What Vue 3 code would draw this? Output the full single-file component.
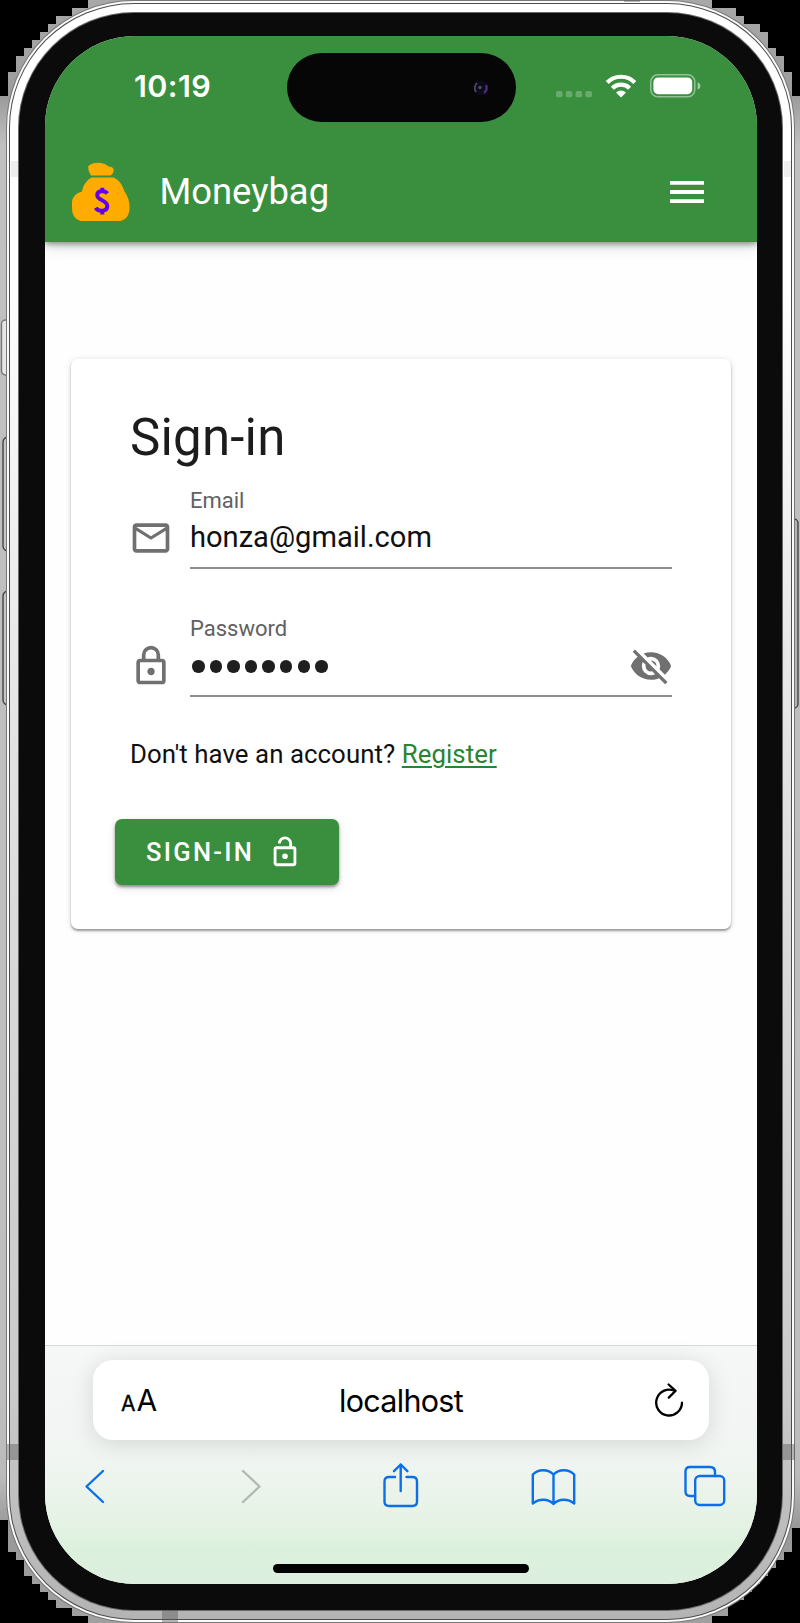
<script setup>
import { ref } from 'vue'

const email = ref('honza@gmail.com')
const passwordLength = 8
const icons = {
  email: 'M22 6C22 4.9 21.1 4 20 4H4C2.9 4 2 4.9 2 6V18C2 19.1 2.9 20 4 20H20C21.1 20 22 19.1 22 18V6M20 6L12 11L4 6H20M20 18H4V8L12 13L20 8V18Z',
  lock: 'M12,17C10.89,17 10,16.1 10,15C10,13.89 10.89,13 12,13A2,2 0 0,1 14,15A2,2 0 0,1 12,17M18,20V10H6V20H18M18,8A2,2 0 0,1 20,10V20A2,2 0 0,1 18,22H6C4.89,22 4,21.1 4,20V10C4,8.89 4.89,8 6,8H7V6A5,5 0 0,1 12,1A5,5 0 0,1 17,6V8H18M12,3A3,3 0 0,0 9,6V8H15V6A3,3 0 0,0 12,3Z',
  lockOpen: 'M18,20V10H6V20H18M18,8A2,2 0 0,1 20,10V20A2,2 0 0,1 18,22H6C4.89,22 4,21.1 4,20V10A2,2 0 0,1 6,8H15V6A3,3 0 0,0 12,3A3,3 0 0,0 9,6H7A5,5 0 0,1 12,1A5,5 0 0,1 17,6V8H18M12,17A2,2 0 0,1 10,15A2,2 0 0,1 12,13A2,2 0 0,1 14,15A2,2 0 0,1 12,17Z',
  eyeOff: 'M11.83,9L15,12.16C15,12.11 15,12.05 15,12A3,3 0 0,0 12,9C11.94,9 11.89,9 11.83,9M7.53,9.8L9.08,11.35C9.03,11.56 9,11.77 9,12A3,3 0 0,0 12,15C12.22,15 12.44,14.97 12.65,14.92L14.2,16.47C13.53,16.8 12.79,17 12,17A5,5 0 0,1 7,12C7,11.21 7.2,10.47 7.53,9.8M2,4.27L4.28,6.55L4.73,7C3.08,8.3 1.78,10 1,12C2.73,16.39 7,19.5 12,19.5C13.55,19.5 15.03,19.2 16.38,18.66L16.81,19.08L19.73,22L21,20.73L3.27,3M12,7A5,5 0 0,1 17,12C17,12.64 16.87,13.26 16.64,13.82L19.57,16.75C21.07,15.5 22.27,13.86 23,12C21.27,7.61 17,4.5 12,4.5C10.6,4.5 9.26,4.75 8,5.2L10.17,7.35C10.74,7.13 11.35,7 12,7Z',
}
</script>

<template>
  <div class="stage">
    <!-- stepped plate behind the phone, with the hardware buttons -->
    <svg class="plate" width="800" height="1623" viewBox="0 0 800 1623" shape-rendering="crispEdges">
      <defs>
        <linearGradient id="plateFill" x1="0" y1="0" x2="0" y2="1">
          <stop offset="0" stop-color="#a8a8a8" />
          <stop offset="0.06" stop-color="#9c9c9c" />
          <stop offset="0.09" stop-color="#c0c0c0" />
          <stop offset="0.85" stop-color="#bebebe" />
          <stop offset="0.91" stop-color="#bbbbbb" />
          <stop offset="0.94" stop-color="#999999" />
          <stop offset="1" stop-color="#a0a0a0" />
        </linearGradient>
      </defs>
      <path
        fill="url(#plateFill)"
        d="M88 0H712V8H736V16H744V24H760V32H768V48H776V56H784V72H792V96H800V1528H792V1552H784V1560H776V1568H768V1576H760V1584H752V1592H744V1600H728V1616H712V1623H88V1616H72V1608H56V1600H48V1592H40V1584H32V1576H24V1560H16V1552H8V1520H0V96H8V72H16V56H24V48H32V40H40V32H48V24H56V16H72V8H88Z"
      />
      <g shape-rendering="auto" stroke="#444" stroke-width="1.4">
        <rect x="1.500" y="320" width="12" height="55" rx="4" fill="#e6e6e6" stroke="#777" />
        <rect x="3" y="437" width="12" height="114" rx="5" fill="#c4c4c4" />
        <rect x="3" y="591" width="12" height="114" rx="5" fill="#c4c4c4" />
        <rect x="786" y="519" width="12" height="189" rx="4" fill="#b4b4b4" />
      </g>
    </svg>

    <div class="edge">
      <div class="rim">
        <div class="groove">
          <div class="band">
            <div class="lip">
              <div class="bezel">
                <div class="screen">
                  <header class="top">
                    <div class="island">
                      <svg width="18" height="18" viewBox="0 0 18 18">
                        <circle cx="9" cy="9" r="7.5" fill="#0c0b18" />
                        <path d="M5 4A7 7 0 0 0 4 13" stroke="#46456c" stroke-width="2" fill="none" />
                        <path d="M14 6A7 7 0 0 1 12 14" stroke="#4a2a80" stroke-width="2.4" fill="none" />
                        <circle cx="8" cy="8.5" r="1.8" fill="#4a4a58" />
                      </svg>
                    </div>
                    <div class="status">
                      <span class="clock">10:19</span>
                      <div class="signals">
                        <svg width="36" height="7" viewBox="0 0 36 7" fill="#fff" opacity=".25">
                          <rect v-for="n in 4" :key="n" :x="(n - 1) * 9.8" y="0" width="6.5" height="6.3" rx="1.8" />
                        </svg>
                        <svg class="wifi" width="32" height="24" viewBox="0 0 32 24" fill="none" stroke="#fff" stroke-width="4.2">
                          <path d="M2.2 8.5C9.6.8 22.4.8 29.8 8.5" />
                          <path d="M7.4 14.2C12 9.5 20 9.5 24.6 14.2" />
                          <path d="M16 23.5L11 18.4C13.8 15.7 18.2 15.7 21 18.4Z" fill="#fff" stroke="none" />
                        </svg>
                        <svg width="51" height="24" viewBox="0 0 51 24">
                          <rect x=".8" y=".8" width="44" height="22" rx="7" fill="none" stroke="#fff" stroke-opacity=".45" stroke-width="1.5" />
                          <rect x="3.4" y="3.4" width="38.8" height="16.8" rx="4.8" fill="#fff" />
                          <path d="M47.6 8.2C51.2 9.4 51.2 14.4 47.6 15.6Z" fill="#fff" opacity=".55" />
                        </svg>
                      </div>
                    </div>
                    <div class="appbar">
                      <svg class="bag" width="58" height="60" viewBox="0 0 58 60">
                        <path fill="#ffab00" d="M19 13.5C17 10 16 7.5 16.300 4C21-.2 31-.8 36.500 4.500C38.500 5 40.500 4.800 41.500 7C42 9.500 41 12 38.5 13.5Z" />
                        <path fill="#ffab00" d="M19.5 15.5H41.5C47 18 50.5 23 52.5 29.5C56 34 57.8 40 57.5 46C57.5 53 54 58 48 59H9C3 57.5 0 53 0 46V40C.5 34.500 4.500 31 10 29.5C11 23.5 14 19 19.5 15.5Z" />
                        <path fill="none" stroke="#6200ea" stroke-width="4" d="M35.3 31.5C33 28.2 25.2 28.2 25.2 33.2C25.2 38.5 35.3 38 35.3 44C35.3 50 26 50 23.8 45.8M30.3 25.8V30M30.3 48V52.5" />
                      </svg>
                      <h1 class="brand">Moneybag</h1>
                      <svg class="menu" width="34" height="22" viewBox="0 0 34 22" fill="#fff">
                        <path d="M0 0H34V3.8H0ZM0 9.1H34V12.9H0ZM0 18.2H34V22H0Z" />
                      </svg>
                    </div>
                  </header>

                  <main class="page">
                    <section class="card">
                      <h2 class="title">Sign-in</h2>
                      <div class="field">
                        <svg class="fieldicon" viewBox="0 0 24 24"><path :d="icons.email" /></svg>
                        <div class="control">
                          <span class="label">Email</span>
                          <div class="value"><span class="mail">{{ email }}</span></div>
                        </div>
                      </div>
                      <div class="field">
                        <svg class="fieldicon" viewBox="0 0 24 24"><path :d="icons.lock" /></svg>
                        <div class="control">
                          <span class="label">Password</span>
                          <div class="value">
                            <span class="dots"><i v-for="n in passwordLength" :key="n"></i></span>
                            <svg class="eye" viewBox="0 0 24 24"><path :d="icons.eyeOff" /></svg>
                          </div>
                        </div>
                      </div>
                      <p class="hint">Don't have an account? <a class="link">Register</a></p>
                      <button class="submit">
                        <span>SIGN-IN</span>
                        <svg width="34" height="34" viewBox="0 0 24 24" fill="#fff"><path :d="icons.lockOpen" /></svg>
                      </button>
                    </section>
                  </main>

                  <footer class="safari">
                    <div class="address">
                      <span class="reader"><small>A</small>A</span>
                      <span class="host">localhost</span>
                      <svg width="28" height="34" viewBox="0 0 28 34" fill="none" stroke="#000" stroke-width="2.3" stroke-linecap="round" stroke-linejoin="round">
                        <path d="M27 19.600A12.900 12.900 0 1 1 20 8.100" />
                        <path d="M13.600 1.500L20.600 7.800L13.800 14.600" />
                      </svg>
                    </div>
                    <nav class="tools">
                      <svg viewBox="0 0 52 52"><path d="M34 11L17.500 26.500L34 42" /></svg>
                      <svg class="off" viewBox="0 0 52 52"><path d="M21 11L37.500 26.500L21 42" /></svg>
                      <svg viewBox="0 0 52 52"><path d="M21 17H15Q10.500 17 10.500 21.500V41.500Q10.500 46 15 46H38.500Q43 46 43 41.500V21.500Q43 17 38.500 17H32.500M26.700 31V4.500M20 11.200L26.700 4.500L33.400 11.200" /></svg>
                      <svg viewBox="0 0 52 52"><path d="M26.500 14.500C21 8.500 11 9 5.800 14.500V43.500C12 38.500 21 38.500 26.500 44C32 38.500 41 38.500 47.200 43.500V14.500C42 9 32 8.500 26.500 14.500V44" /></svg>
                      <svg viewBox="0 0 52 52"><path d="M16 36H11Q6.500 36 6.500 31.500V11.500Q6.500 7 11 7H31Q36 7 36 12V16" /><rect x="16.200" y="16" width="29" height="29" rx="4.500" /></svg>
                    </nav>
                    <div class="home"></div>
                  </footer>
                </div>
              </div>
            </div>
          </div>
        </div>
      </div>
    </div>

    <!-- antenna lines across the metal frame -->
    <svg class="plate" width="800" height="1623" viewBox="0 0 800 1623" fill="#555" fill-opacity=".42">
      <path d="M7 1444H19V1460H7ZM783 1444H795V1460H783ZM162 1610H178V1622H162Z" />
      <path d="M11 161H18V177H11ZM784 161H791V177H784Z" fill-opacity=".1" />
      <path d="M624 0H640V2H624Z" />
    </svg>
  </div>
</template>

<style>
body {
  background: #000;
}
</style>

<style scoped>
.stage {
  position: relative;
  box-sizing: border-box;
  width: 800px;
  height: 1623px;
  padding: 0 5px 0 6px;
  overflow: hidden;
  background: #000;
  font-family: Roboto, "Liberation Sans", sans-serif;
}
.plate {
  position: absolute;
  left: 0;
  top: 0;
}
.stage div {
  box-sizing: border-box;
}
.edge,
.rim,
.groove,
.band,
.lip,
.bezel {
  height: 100%;
}
.edge {
  position: relative;
  padding: 1px;
  border-radius: 128px;
  background: #777;
}
.rim {
  padding: 2px;
  border-radius: 127px;
  background: #fafafa;
}
.groove {
  padding: 1px;
  border-radius: 125px;
  background: #4c4c4c;
}
.band {
  padding: 8px;
  border-radius: 124px;
  background: linear-gradient(#fff 0, #fff 17%, #e8e8e8 40%, #d8d8d8 60%, #cacaca 86%, #b4b4b4 100%);
}
.lip {
  padding: 1px;
  border-radius: 116px;
  background: #6a6a6a;
}
.bezel {
  padding: 23px 25px 25px 26px;
  border-radius: 115px;
  background: #0b0b0b;
}
.screen {
  display: flex;
  flex-direction: column;
  height: 1548px;
  border-radius: 90px;
  overflow: hidden;
  background: #fff;
}
.top {
  position: relative;
  z-index: 1;
  height: 206px;
  flex: none;
  background: #398f3d;
  box-shadow: 0 2px 6px rgba(0, 0, 0, 0.42), 0 5px 14px rgba(0, 0, 0, 0.12);
}
.island {
  position: absolute;
  left: 242px;
  top: 17px;
  width: 229px;
  height: 69px;
  border-radius: 35px;
  background: #060606;
  display: flex;
  align-items: center;
  justify-content: flex-end;
  padding: 1px 26px 0 0;
}
.status {
  display: flex;
  justify-content: space-between;
  align-items: center;
  height: 100px;
  padding: 0 56px 0 89px;
}
.clock {
  font: 600 30.500px/36px Inter, sans-serif;
  letter-spacing: 0.400px;
  color: #fff;
}
.signals {
  display: flex;
  align-items: center;
}
.signals svg:first-child {
  margin-top: 16px;
}
.wifi {
  margin: 0 13px 0 13px;
}
.appbar {
  display: flex;
  align-items: center;
  height: 106px;
  padding: 5px 53px 0 27px;
}
.brand {
  flex: 1;
  margin: 0 0 0 29.500px;
  font: 400 36.400px/44px Roboto, sans-serif;
  color: #fff;
}
.page {
  flex: 1;
  padding: 117px 26px 0;
  background: #fefefe;
}
.card {
  box-sizing: border-box;
  height: 570px;
  padding: 49px 59px 0;
  border-radius: 7px;
  background: #fff;
  box-shadow: 0 2px 2px rgba(0, 0, 0, 0.33), 0 1px 6px rgba(0, 0, 0, 0.14);
  color: #1c1c1c;
}
.title {
  margin: 0 0 20px;
  font: 400 51px/60px Roboto, sans-serif;
  letter-spacing: 0.200px;
}
.field {
  display: flex;
  height: 81px;
  margin-bottom: 47px;
}
.fieldicon {
  width: 44px;
  height: 44px;
  margin: 28px 17px 0 -1px;
  fill: #707070;
}
.control {
  flex: 1;
  display: flex;
  flex-direction: column;
  justify-content: space-between;
}
.label {
  font-size: 22px;
  line-height: 25px;
  color: #616161;
}
.value {
  display: flex;
  justify-content: space-between;
  height: 49px;
  border-bottom: 2px solid #8d8d8d;
}
.mail {
  font-size: 29.100px;
  line-height: 35px;
  color: #101010;
}
.dots {
  display: flex;
  gap: 5.100px;
  padding: 12px 0 0 2px;
}
.dots i {
  width: 12.500px;
  height: 12.500px;
  border-radius: 50%;
  background: #1f1f1f;
}
.eye {
  width: 44px;
  height: 44px;
  margin: -4px -1px 0 0;
  fill: #707070;
}
.hint {
  margin: -5px 0 50px;
  font-size: 25.800px;
  line-height: 30px;
  letter-spacing: 0.060px;
  color: #101010;
}
.link {
  color: #2a8430;
  text-decoration: underline;
  text-decoration-thickness: 1.500px;
  text-underline-offset: 3px;
}
.submit {
  display: flex;
  align-items: center;
  box-sizing: border-box;
  width: 224px;
  height: 66px;
  margin: 0 0 0 -15px;
  padding: 0 0 0 31px;
  gap: 14px;
  border: 0;
  border-radius: 7px;
  background: #398f3d;
  box-shadow: 0 2px 3px rgba(0, 0, 0, 0.4), 0 3px 8px rgba(0, 0, 0, 0.13);
  font: 500 25.500px/30px Roboto, sans-serif;
  letter-spacing: 2.300px;
  color: #fff;
}
.safari {
  box-sizing: border-box;
  flex: none;
  height: 239px;
  padding: 14px 0 0;
  border-top: 1px solid #d5dad7;
  background: linear-gradient(#f6f7f7 0, #f1f5f2 45%, #e7f3e7 70%, #dcf1dd 85%, #dcefdf 100%);
}
.address {
  display: flex;
  align-items: center;
  justify-content: space-between;
  height: 80px;
  margin: 0 48px;
  padding: 0 26px 0 28px;
  border-radius: 20px;
  background: #fff;
  box-shadow: 0 3px 24px rgba(0, 0, 0, 0.13);
  font-family: Inter, sans-serif;
  color: #000;
}
.reader {
  width: 35px;
  white-space: nowrap;
  font-size: 30px;
}
.reader small {
  font-size: 21px;
  margin-right: 1px;
  -webkit-text-stroke: 0.300px #000;
}
.host {
  margin-right: 9px;
  font-size: 30.500px;
  letter-spacing: -0.700px;
}
.tools {
  display: flex;
  justify-content: space-between;
  height: 52px;
  margin-top: 20px;
  padding: 0 26px 0 24px;
}
.tools svg {
  width: 52px;
  height: 52px;
  fill: none;
  stroke: #0a6fe8;
  stroke-width: 2.400;
  stroke-linecap: round;
  stroke-linejoin: round;
}
.tools svg.off {
  stroke: #b0bab1;
}
.home {
  width: 256px;
  height: 9px;
  margin: 52px auto 0;
  border-radius: 5px;
  background: #000;
}
</style>
